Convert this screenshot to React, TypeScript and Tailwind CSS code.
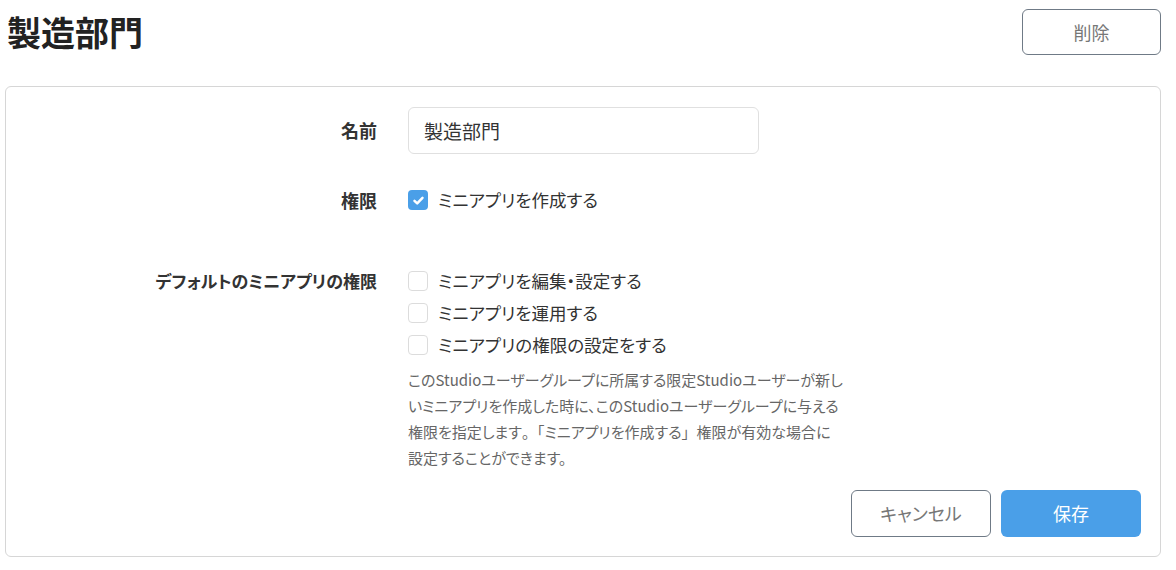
import React, { useState } from 'react';

const font = "font-['Meiryo','Noto_Sans_CJK_JP','Noto_Sans',sans-serif] [font-feature-settings:'palt']";

interface CheckProps {
  label: string;
  checked: boolean;
  onToggle: () => void;
}

const Check: React.FC<CheckProps> = ({ label, checked, onToggle }) => (
  <label className="flex h-[32px] cursor-pointer items-center gap-[10px]" onClick={onToggle}>
    {checked ? (
      <span className="flex h-[20px] w-[20px] items-center justify-center rounded-[4px] bg-[#4a9fe8]">
        <svg viewBox="0 0 12 12" className="h-[13px] w-[13px]">
          <path d="M2.3 6.3 L4.8 8.7 L9.7 3.5" fill="none" stroke="white" strokeWidth="2.3" strokeLinecap="round" strokeLinejoin="round" />
        </svg>
      </span>
    ) : (
      <span className="h-[20px] w-[20px] rounded-[4px] border border-[#dcdcdc] bg-white" />
    )}
    <span className="text-[17.5px] text-[#333]">{label}</span>
  </label>
);

// punctuation keeps its full width, as in the reference
const Wide: React.FC<{ children: React.ReactNode }> = ({ children }) => (
  <span className="[font-feature-settings:normal]">{children}</span>
);

const App: React.FC = () => {
  const [name, setName] = useState('製造部門');
  const [canCreate, setCanCreate] = useState(true);
  const [defaults, setDefaults] = useState([false, false, false]);

  const toggleDefault = (i: number) =>
    setDefaults((prev) => prev.map((v, idx) => (idx === i ? !v : v)));

  return (
    <div className={`${font} bg-white px-[5px] text-[#333]`}>
      <div className="w-[1156px]">
        {/* Header */}
        <div className="flex items-center justify-between pt-[9px] pb-[31px]">
          <h1 className="pl-[2px] text-[34px] font-bold leading-[46px] text-[#222]">製造部門</h1>
          <button className="h-[46px] w-[139px] rounded-[6px] border border-[#6f7a86] bg-white text-[18px] text-[#777]">
            削除
          </button>
        </div>

        {/* Form card */}
        <div className="rounded-[6px] border border-[#d6d6d6] pt-[20px] pb-[19px]">
          <div className="grid grid-cols-[371px_1fr] gap-x-[31px]">
            <div className="flex h-[47px] items-center justify-end text-[18px] font-bold text-[#333]">名前</div>
            <div>
              <input
                value={name}
                onChange={(e) => setName(e.target.value)}
                className="h-[47px] w-[351px] rounded-[6px] border border-[#e0e0e0] px-[15px] text-[19px] text-[#333] outline-none"
              />
            </div>

            <div className="mt-[30px] flex h-[32px] items-center justify-end text-[18px] font-bold text-[#333]">権限</div>
            <div className="mt-[30px]">
              <Check label="ミニアプリを作成する" checked={canCreate} onToggle={() => setCanCreate(!canCreate)} />
            </div>

            <div className="mt-[49px] flex h-[32px] items-center justify-end text-[17px] font-bold text-[#333]">
              デフォルトのミニアプリの権限
            </div>
            <div className="mt-[49px]">
              <Check label="ミニアプリを編集・設定する" checked={defaults[0]} onToggle={() => toggleDefault(0)} />
              <Check label="ミニアプリを運用する" checked={defaults[1]} onToggle={() => toggleDefault(1)} />
              <Check label="ミニアプリの権限の設定をする" checked={defaults[2]} onToggle={() => toggleDefault(2)} />
              <p className="mt-[6px] text-[15px] leading-[26px] text-[#666]">
                このStudioユーザーグループに所属する限定Studioユーザーが新し
                <br />
                いミニアプリを作成した時に、このStudioユーザーグループに与える
                <br />
                権限を指定します<Wide>。「</Wide>ミニアプリを作成する<Wide>」</Wide>権限が有効な場合に
                <br />
                設定することができます。
              </p>
            </div>
          </div>

          <div className="mt-[19px] flex justify-end gap-[10px] pr-[19px]">
            <button className="h-[47px] w-[140px] rounded-[6px] border border-[#6f7a86] bg-white text-[18px] text-[#777]">
              キャンセル
            </button>
            <button className="h-[47px] w-[140px] rounded-[6px] bg-[#4a9fe8] text-[18px] text-white">保存</button>
          </div>
        </div>
      </div>
    </div>
  );
};

export default App;
